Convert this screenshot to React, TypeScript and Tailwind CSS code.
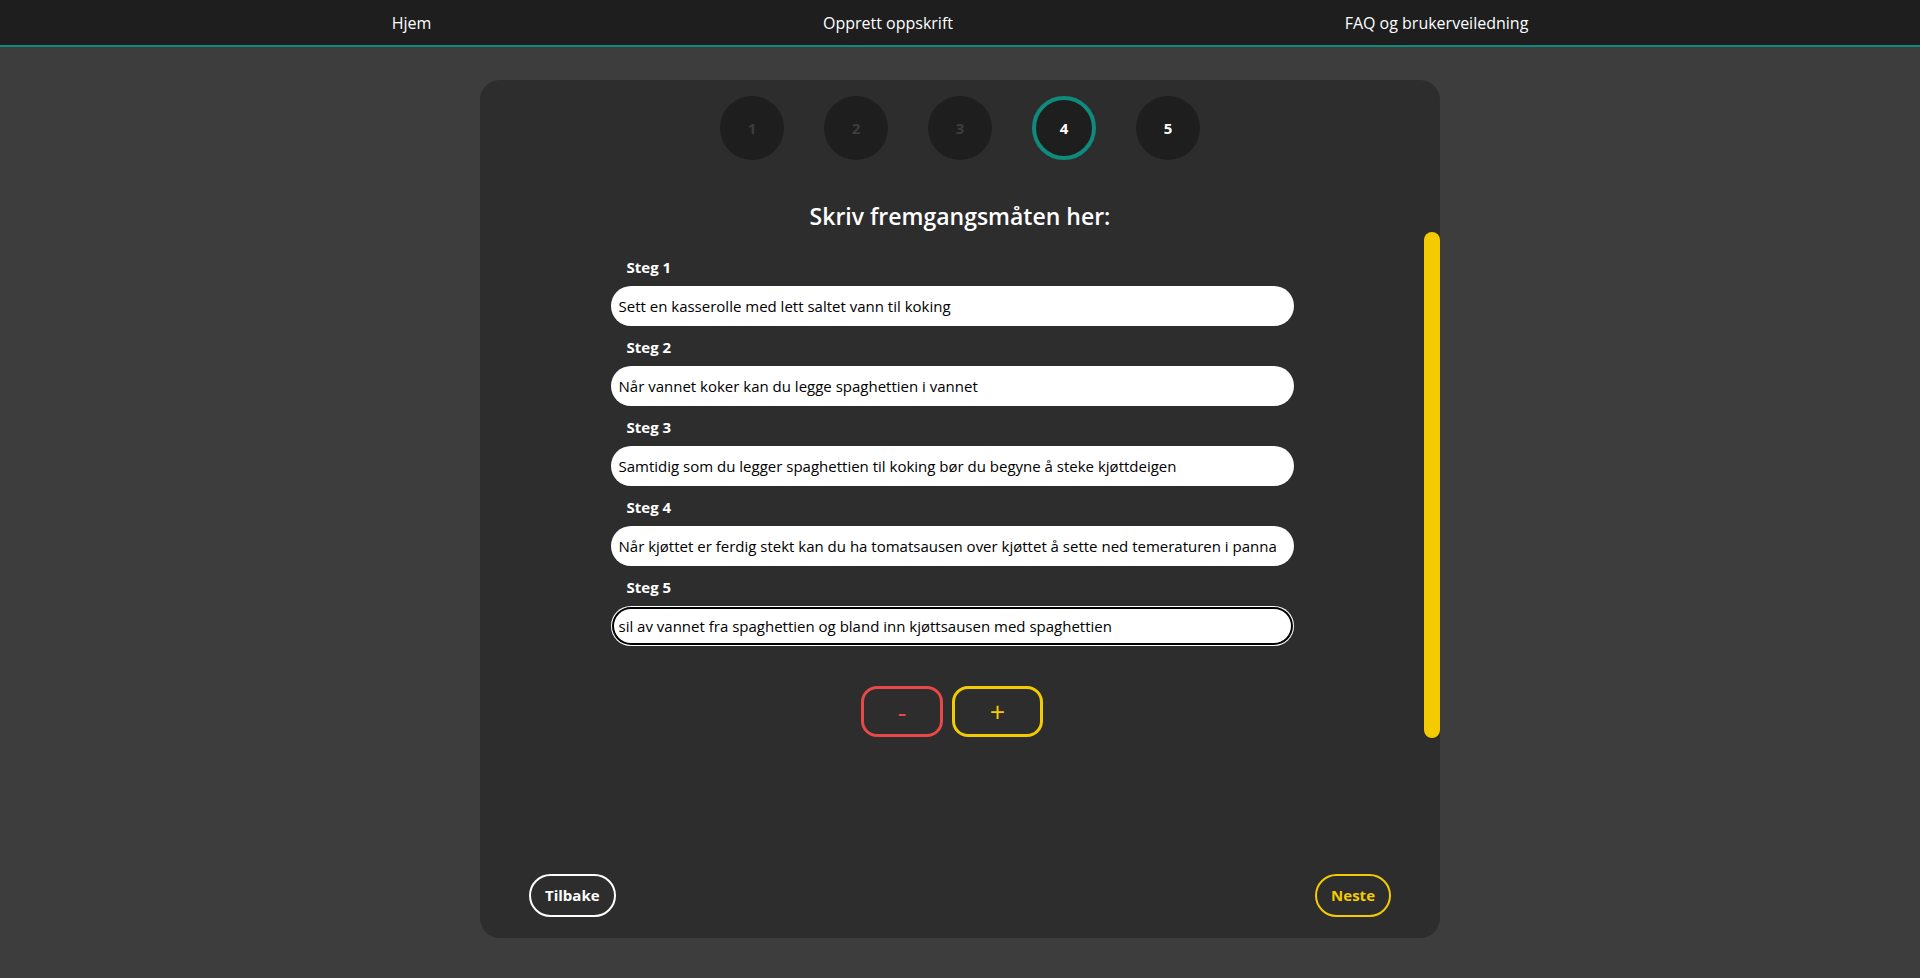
import { useState } from "react"

const steps = [
  "Sett en kasserolle med lett saltet vann til koking",
  "Når vannet koker kan du legge spaghettien i vannet",
  "Samtidig som du legger spaghettien til koking bør du begyne å steke kjøttdeigen",
  "Når kjøttet er ferdig stekt kan du ha tomatsausen over kjøttet å sette ned temeraturen i panna",
  "sil av vannet fra spaghettien og bland inn kjøttsausen med spaghettien",
]

const NavBar = () => {
  return (
    <nav className="h-[47px] bg-[#1e1e1e] border-b-2 border-[#0f8a7b] flex items-center justify-evenly text-white text-[16px]">
      <a href="#">Hjem</a>
      <a href="#">Opprett oppskrift</a>
      <a href="#">FAQ og brukerveiledning</a>
    </nav>
  )
}

const StepCircles = ({ active }: { active: number }) => {
  return (
    <div className="flex justify-center gap-10">
      {[1, 2, 3, 4, 5].map((n) => (
        <div
          key={n}
          className={
            n === active
              ? "w-16 h-16 rounded-full bg-[#1e1e1e] border-4 border-[#0f8a7b] flex items-center justify-center text-[15px] font-bold text-white"
              : n > active
              ? "w-16 h-16 rounded-full bg-[#1e1e1e] flex items-center justify-center text-[15px] font-bold text-white"
              : "w-16 h-16 rounded-full bg-[#1e1e1e] flex items-center justify-center text-[15px] font-bold text-[#3d3d3d]"
          }
        >
          {n}
        </div>
      ))}
    </div>
  )
}

export default function App() {
  const [values, setValues] = useState(steps)

  const onChange = (i: number, value: string) => {
    const next = [...values]
    next[i] = value
    setValues(next)
  }

  return (
    <div className="min-h-screen bg-[#3d3d3d] font-['Segoe_UI','Open_Sans',sans-serif]">
      <NavBar />
      <div className="w-[960px] h-[858px] mx-auto mt-[33px] bg-[#2d2d2d] rounded-[20px] pt-4 pb-[21px] flex flex-col">
        <StepCircles active={4} />
        <h1 className="mt-[40px] text-center text-white text-[23px] leading-8 font-semibold">Skriv fremgangsmåten her:</h1>

        {/* steps list with the yellow scroll thumb on the right */}
        <div className="h-[620px] flex">
          <div className="flex-1 pt-[25px] flex flex-col items-center">
            <div className="flex flex-col gap-[11px]">
              {values.map((v, i) => (
                <div key={i} className="flex flex-col gap-[9px]">
                  <label className="pl-4 text-white text-[15px] leading-5 font-bold">Steg {i + 1}</label>
                  <input
                    type="text"
                    value={v}
                    onChange={(e) => onChange(i, e.target.value)}
                    className={
                      i === values.length - 1
                        ? "w-[683px] h-10 rounded-full bg-white text-black text-[15px] px-2 outline-none shadow-[inset_0_0_0_1px_#fff,inset_0_0_0_3px_#000]"
                        : "w-[683px] h-10 rounded-full bg-white text-black text-[15px] px-2 outline-none"
                    }
                  />
                </div>
              ))}
            </div>
            <div className="mt-10 flex gap-[9px]">
              <button className="w-[82px] h-[51px] rounded-2xl border-[3px] border-[#e84848] text-[#e84848] text-[27px] font-medium leading-none">-</button>
              <button className="w-[91px] h-[51px] rounded-2xl border-[3px] border-[#f3cb00] text-[#f3cb00] text-[27px] font-medium leading-none">+</button>
            </div>
          </div>
          <div className="w-4">
            <div className="h-[506px] rounded-full bg-[#f3cb00]" />
          </div>
        </div>

        <div className="mt-auto px-[49px] flex justify-between">
          <button className="h-[43px] px-[14px] rounded-full border-2 border-white text-white text-[15px] font-bold">Tilbake</button>
          <button className="h-[43px] px-[14px] rounded-full border-2 border-[#f3cb00] text-[#f3cb00] text-[15px] font-bold">Neste</button>
        </div>
      </div>
    </div>
  )
}
